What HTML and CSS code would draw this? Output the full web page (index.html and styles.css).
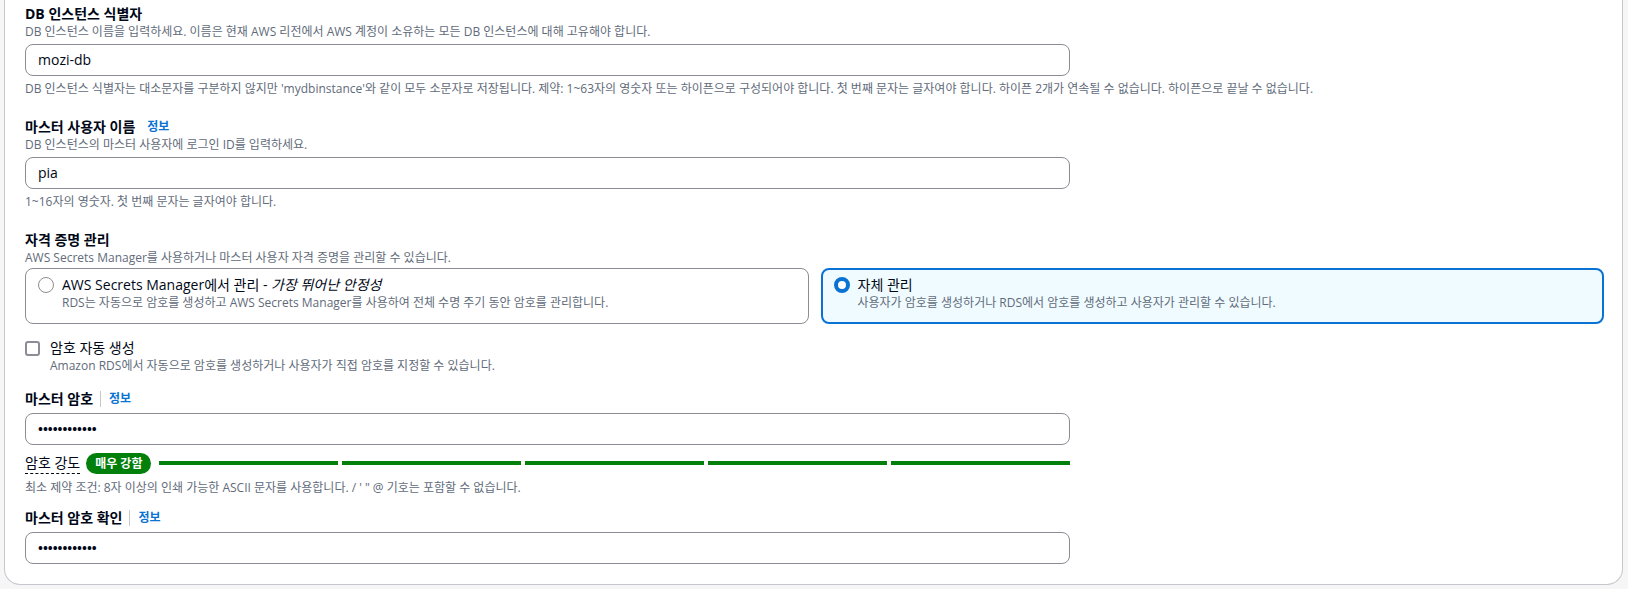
FILE: index.html
```html
<!DOCTYPE html>
<html>
  <head>
    <title>DB 설정</title>
    <link rel="stylesheet" href="styles.css">
  </head>
  <body>
    <section class="card">

      <div class="field">
        <div class="label">DB 인스턴스 식별자</div>
        <div class="desc">DB 인스턴스 이름을 입력하세요. 이름은 현재 AWS 리전에서 AWS 계정이 소유하는 모든 DB 인스턴스에 대해 고유해야 합니다.</div>
        <div class="input">mozi-db</div>
        <div class="hint">DB 인스턴스 식별자는 대소문자를 구분하지 않지만 'mydbinstance'와 같이 모두 소문자로 저장됩니다. 제약: 1~63자의 영숫자 또는 하이픈으로 구성되어야 합니다. 첫 번째 문자는 글자여야 합니다. 하이픈 2개가 연속될 수 없습니다. 하이픈으로 끝날 수 없습니다.</div>
      </div>

      <div class="field">
        <div class="label">마스터 사용자 이름<a class="info">정보</a></div>
        <div class="desc">DB 인스턴스의 마스터 사용자에 로그인 ID를 입력하세요.</div>
        <div class="input">pia</div>
        <div class="hint">1~16자의 영숫자. 첫 번째 문자는 글자여야 합니다.</div>
      </div>

      <div class="field">
        <div class="label">자격 증명 관리</div>
        <div class="desc">AWS Secrets Manager를 사용하거나 마스터 사용자 자격 증명을 관리할 수 있습니다.</div>
        <div class="tiles">
          <div class="tile">
            <span class="radio"></span>
            <div>
              <div class="tile-title">AWS Secrets Manager에서 관리 - <i>가장 뛰어난 안정성</i></div>
              <div class="tile-desc">RDS는 자동으로 암호를 생성하고 AWS Secrets Manager를 사용하여 전체 수명 주기 동안 암호를 관리합니다.</div>
            </div>
          </div>
          <div class="tile selected">
            <span class="radio"></span>
            <div>
              <div class="tile-title">자체 관리</div>
              <div class="tile-desc">사용자가 암호를 생성하거나 RDS에서 암호를 생성하고 사용자가 관리할 수 있습니다.</div>
            </div>
          </div>
        </div>
      </div>

      <div class="check">
        <span class="box"></span>
        <div>
          <div class="check-title">암호 자동 생성</div>
          <div class="check-desc">Amazon RDS에서 자동으로 암호를 생성하거나 사용자가 직접 암호를 지정할 수 있습니다.</div>
        </div>
      </div>

      <div class="field after-check">
        <div class="label">마스터 암호<span class="sep"></span><a class="info">정보</a></div>
        <div class="input dots">••••••••••••</div>
        <div class="strength">
          <span class="strength-label">암호 강도</span>
          <span class="badge">매우 강함</span>
          <div class="bars">
            <span></span><span></span><span></span><span></span><span></span>
          </div>
        </div>
        <div class="hint">최소 제약 조건: 8자 이상의 인쇄 가능한 ASCII 문자를 사용합니다. / ' " @ 기호는 포함할 수 없습니다.</div>
      </div>

      <div class="field tight">
        <div class="label">마스터 암호 확인<span class="sep"></span><a class="info">정보</a></div>
        <div class="input dots">••••••••••••</div>
      </div>

    </section>
  </body>
</html>
```

FILE: styles.css
```css
html, body {
  margin: 0;
  background: #f6f6f6;
  color: #000716;
  font-family: 'Open Sans', 'Noto Sans CJK KR', sans-serif;
}

/* outer card, its top is scrolled off */
.card {
  margin-left: 4px;
  width: 1579px;
  padding: 3px 18px 20px 20px;
  background: white;
  border: 1px solid #c6c6cd;
  border-top: none;
  border-radius: 0 0 16px 16px;
  display: flex;
  flex-direction: column;
  gap: 19px;
}

.field {
  display: flex;
  flex-direction: column;
}

.field.after-check {
  margin-top: -5px;
}

.field.tight {
  margin-top: -8px;
}

.label {
  font-size: 14px;
  font-weight: 700;
  line-height: 21px;
  display: flex;
  align-items: center;
}

.info {
  color: #0972d3;
  font-size: 12px;
  font-weight: 700;
  margin-left: 12px;
}

.sep {
  width: 1px;
  height: 16px;
  background: #c6c6cd;
  margin: 0 8px 0 7px;
}

.sep + .info {
  margin-left: 0;
}

.desc, .hint {
  font-size: 12px;
  line-height: 16px;
  color: #5f6b7a;
}

.input {
  box-sizing: border-box;
  width: 1045px;
  height: 32px;
  margin-top: 4px;
  padding: 0 12px;
  border: 1px solid #8c8c94;
  border-radius: 8px;
  font-size: 14px;
  line-height: 30px;
}

.hint {
  margin-top: 5px;
}

.dots {
  font-size: 13px;
  font-weight: 700;
}

/* credential tiles */
.tiles {
  display: grid;
  grid-template-columns: 1fr 1fr;
  gap: 12px;
  margin-top: 2px;
}

.tile {
  box-sizing: border-box;
  height: 56px;
  border: 1px solid #8c8c94;
  border-radius: 8px;
  padding: 6px 12px 0 12px;
  display: flex;
  gap: 8px;
}

.tile.selected {
  border: 2px solid #0972d3;
  background: #f0fbff;
  padding: 5px 11px 0 11px;
}

.radio {
  box-sizing: border-box;
  flex: none;
  width: 16px;
  height: 16px;
  margin-top: 2px;
  border: 1px solid #8c8c94;
  border-radius: 50%;
  background: white;
}

.selected .radio {
  border: 4px solid #0972d3;
}

.tile-title {
  font-size: 14px;
  line-height: 20px;
}

.tile-desc {
  font-size: 12px;
  line-height: 16px;
  color: #5f6b7a;
}

/* checkbox */
.check {
  display: flex;
  gap: 10px;
  margin-top: -5px;
}

.box {
  box-sizing: border-box;
  flex: none;
  width: 15px;
  height: 15px;
  margin-top: 3px;
  border: 2px solid #8c8c94;
  border-radius: 3px;
}

.check-title {
  font-size: 14px;
  line-height: 20px;
}

.check-desc {
  font-size: 12px;
  line-height: 16px;
  color: #5f6b7a;
}

/* strength meter */
.strength {
  display: flex;
  align-items: center;
  width: 1045px;
  height: 22px;
  margin-top: 7px;
}

.strength-label {
  font-size: 14px;
  line-height: 20px;
  border-bottom: 1px dashed #000716;
}

.badge {
  background: #037f0c;
  color: white;
  font-size: 12px;
  font-weight: 700;
  line-height: 21px;
  padding: 0 9px;
  border-radius: 11px;
  margin: 0 8px 0 6px;
}

.bars {
  flex: 1;
  display: flex;
  gap: 4px;
}

.bars span {
  flex: 1;
  height: 4px;
  background: #037f0c;
}

.strength + .hint {
  margin-top: 6px;
}
```
